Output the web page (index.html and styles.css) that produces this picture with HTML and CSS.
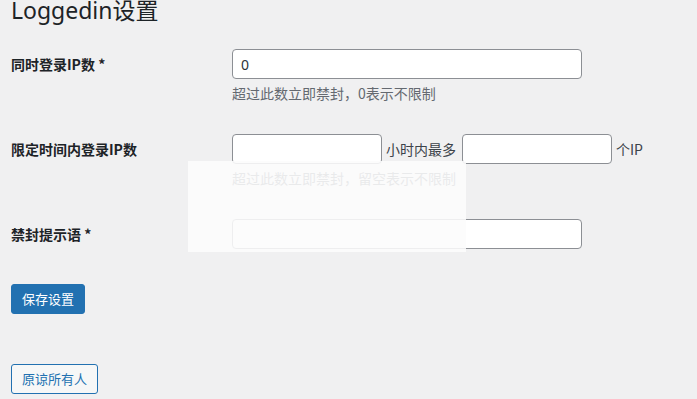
FILE: index.html
```html
<!DOCTYPE html>
<html lang="zh-CN">
<head>
<meta charset="utf-8">
<title>Loggedin设置</title>
<link rel="stylesheet" href="styles.css">
</head>
<body>
<div class="wrap">
  <h1 class="title">Loggedin设置</h1>
  <form class="settings">
    <div class="row row-first">
      <label class="label">同时登录IP数 *</label>
      <div class="field">
        <input class="input input-wide" type="text" value="0">
        <p class="desc">超过此数立即禁封，0表示不限制</p>
      </div>
    </div>
    <div class="row">
      <label class="label">限定时间内登录IP数</label>
      <div class="field">
        <div class="inline">
          <input class="input input-short" type="text">
          <span class="unit">小时内最多</span>
          <input class="input input-short" type="text">
          <span class="unit">个IP</span>
        </div>
        <p class="desc">超过此数立即禁封，留空表示不限制</p>
      </div>
    </div>
    <div class="row">
      <label class="label">禁封提示语 *</label>
      <div class="field">
        <input class="input input-wide" type="text">
      </div>
    </div>
    <div class="actions">
      <button class="btn btn-primary" type="button">保存设置</button>
    </div>
    <div class="actions actions-secondary">
      <button class="btn btn-secondary" type="button">原谅所有人</button>
    </div>
  </form>
</div>
<div class="veil"></div>
</body>
</html>
```
FILE: styles.css
```css
html, body {
  margin: 0;
  padding: 0;
}
body {
  background: #f0f0f1;
  font-family: "Noto Sans", "Noto Sans CJK SC", sans-serif;
  color: #1d2327;
  position: relative;
  width: 697px;
  height: 399px;
  overflow: hidden;
}
.wrap {
  padding-left: 11px;
}
.title {
  margin: 0;
  font-size: 23px;
  line-height: 21px;
  font-weight: 400;
  color: #1d2327;
  font-family: "Noto Sans", "Noto Sans CJK SC", sans-serif;
}
.settings {
  margin: 0;
  padding-top: 28px;
}
.row {
  display: grid;
  grid-template-columns: 221px 1fr;
  margin-bottom: 31px;
}
.label {
  font-size: 14px;
  line-height: 30px;
  font-weight: 700;
  color: #1d2327;
  font-family: "Noto Sans CJK SC", sans-serif;
}
.field {
  display: flex;
  flex-direction: column;
  align-items: flex-start;
}
.input {
  box-sizing: border-box;
  height: 30px;
  border: 1px solid #8c8f94;
  border-radius: 4px;
  background: #fff;
  padding: 0 8px;
  font-size: 14px;
  font-family: "Noto Sans", "Noto Sans CJK SC", sans-serif;
  color: #2c3338;
  margin: 0;
  outline: none;
}
.input-wide {
  width: 350px;
}
.input-short {
  width: 150px;
}
.inline {
  display: flex;
  align-items: center;
}
.unit {
  font-size: 14px;
  color: #3c434a;
  margin: 0 6px 0 4px;
  font-family: "Noto Sans CJK SC", sans-serif;
}
.desc {
  margin: 4px 0 0;
  font-size: 14px;
  line-height: 20px;
  color: #646970;
  font-family: "Noto Sans CJK SC", sans-serif;
}
.actions {
  margin-top: 35px;
}
.actions-secondary {
  margin-top: 50px;
}
.btn {
  box-sizing: border-box;
  height: 30px;
  padding: 0 10px;
  border-radius: 3px;
  font-size: 13px;
  line-height: 28px;
  font-family: "Noto Sans CJK SC", sans-serif;
  cursor: pointer;
}
.btn-primary {
  background: #2271b1;
  border: 1px solid #2271b1;
  color: #fff;
}
.btn-secondary {
  background: #f6f7f7;
  border: 1px solid #2271b1;
  color: #2271b1;
}
.veil {
  position: absolute;
  left: 188px;
  top: 161px;
  width: 278px;
  height: 91px;
  background: rgba(252, 252, 252, 0.88);
}
```
